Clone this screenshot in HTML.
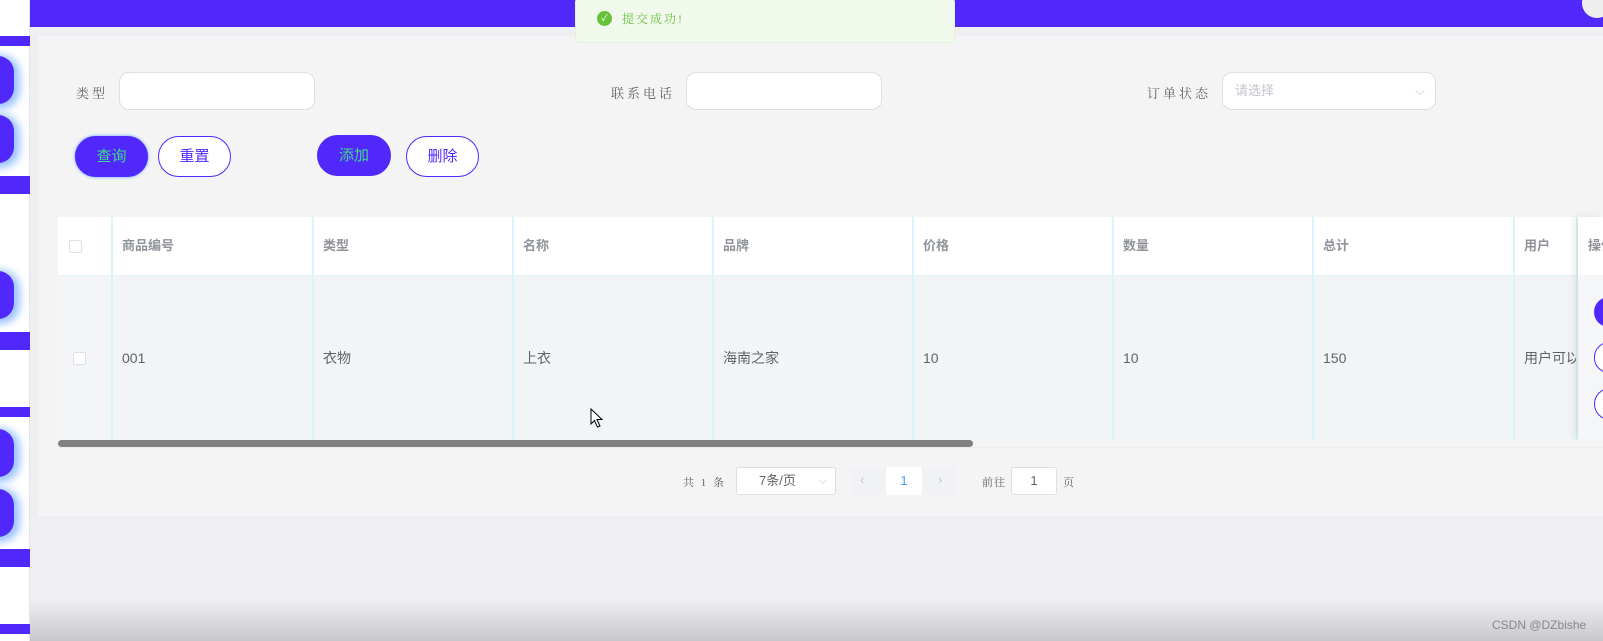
<!DOCTYPE html>
<html><head><meta charset="utf-8"><style>
*{box-sizing:border-box;margin:0;padding:0}
body{width:1603px;height:641px;overflow:hidden;background:#eeeef3;font-family:"Liberation Sans","Noto Sans CJK SC",sans-serif;position:relative}
.abs{position:absolute}
.top{left:30px;top:0;width:1573px;height:27px;background:#5128fb}
.side{left:0;top:0;width:30px;height:641px;background:#fff;border-right:1px solid #e4e4ea}
.bar{left:0;width:30px;background:#5128fb}
.blob{left:-30px;width:44px;height:48px;border-radius:16px;background:#5128fb;box-shadow:3px 2px 8px 3px #9cc4ff}
.panel{left:38px;top:36px;width:1565px;height:480px;background:#f4f4f5}
.lbl{font-family:"Liberation Serif","Noto Serif CJK SC",serif;font-size:13px;color:#606266;letter-spacing:3px}
.inp{height:38px;background:#fff;border:1px solid #dcdfe6;border-radius:10px}
.btn{height:41px;border-radius:21px;font-size:15px;text-align:center;line-height:39px}
.pri{background:#5128fb;color:#3ddc84;border:1px solid #5128fb}
.pln{background:#fff;color:#5128fb;border:1px solid #5128fb}
.th{top:217px;height:58px;background:#fff;font-size:13px;font-weight:bold;color:#909399;line-height:58px;padding-left:9px;border-right:2px solid #d9f4fb}
.td{top:275px;height:165px;background:#f2f5f7;font-size:14px;color:#606266;line-height:165px;padding-left:9px;border-right:2px solid #d9f4fb;border-top:1px solid #e4f4fa}
.cb{width:13px;height:13px;border:1px solid #dcdfe6;background:#fff;border-radius:2px}
.pg{font-family:"Liberation Serif","Noto Serif CJK SC",serif;font-size:11px;color:#606266}
</style></head><body>
<div class="abs side"></div>
<div class="abs bar" style="top:36px;height:10px"></div>
<div class="abs bar" style="top:176px;height:18px"></div>
<div class="abs bar" style="top:332px;height:18px"></div>
<div class="abs bar" style="top:407px;height:10px"></div>
<div class="abs bar" style="top:549px;height:18px"></div>
<div class="abs bar" style="top:624px;height:10px"></div>
<div class="abs blob" style="top:56px"></div>
<div class="abs blob" style="top:115px"></div>
<div class="abs blob" style="top:271px"></div>
<div class="abs blob" style="top:429px"></div>
<div class="abs blob" style="top:489px"></div>
<div class="abs top"></div>
<div class="abs" style="left:1582px;top:-12px;width:30px;height:30px;border-radius:50%;background:#eee"></div>
<div class="abs panel"></div>
<div class="abs" style="left:30px;top:600px;width:1573px;height:41px;background:linear-gradient(#eeeef3,#c8c8cc)"></div>
<div class="abs" style="left:1492px;top:618px;font-size:12px;color:#888">CSDN @DZbishe</div>

<div class="abs" style="left:575px;top:-2px;width:380px;height:45px;background:#f0f9eb;border:1px solid #e1f3d8;border-radius:4px"></div>
<div class="abs" style="left:597px;top:11px;width:15px;height:15px;border-radius:50%;background:#67c23a;color:#fff;font-size:9px;text-align:center;line-height:15px">✓</div>
<div class="abs" style="left:622px;top:10px;font-family:'Liberation Serif','Noto Serif CJK SC',serif;font-size:12px;color:#67c23a;letter-spacing:2px">提交成功!</div>

<div class="abs lbl" style="left:76px;top:83px">类型</div>
<div class="abs inp" style="left:119px;top:72px;width:196px"></div>
<div class="abs lbl" style="left:611px;top:83px">联系电话</div>
<div class="abs inp" style="left:686px;top:72px;width:196px"></div>
<div class="abs lbl" style="left:1147px;top:83px">订单状态</div>
<div class="abs inp" style="left:1222px;top:72px;width:214px;font-size:13px;color:#c0c4cc;line-height:36px;padding-left:12px">请选择<span style="position:absolute;right:10px;top:0;color:#c0c4cc">⌵</span></div>

<div class="abs btn pri" style="left:75px;top:136px;width:73px;box-shadow:0 0 3px #5aa0ff">查询</div>
<div class="abs btn pln" style="left:158px;top:136px;width:73px;color:#5128fb">重置</div>
<div class="abs btn pri" style="left:317px;top:135px;width:74px">添加</div>
<div class="abs btn pln" style="left:406px;top:136px;width:73px">删除</div>

<div class="abs th" style="left:58px;width:55px"></div>
<div class="abs cb" style="left:69px;top:240px"></div>
<div class="abs th" style="left:113px;width:201px">商品编号</div>
<div class="abs th" style="left:314px;width:200px">类型</div>
<div class="abs th" style="left:514px;width:200px">名称</div>
<div class="abs th" style="left:714px;width:200px">品牌</div>
<div class="abs th" style="left:914px;width:200px">价格</div>
<div class="abs th" style="left:1114px;width:200px">数量</div>
<div class="abs th" style="left:1314px;width:201px">总计</div>
<div class="abs th" style="left:1515px;width:63px">用户</div>

<div class="abs td" style="left:58px;width:55px;background:#f3f5f7"></div>
<div class="abs cb" style="left:73px;top:352px"></div>
<div class="abs td" style="left:113px;width:201px">001</div>
<div class="abs td" style="left:314px;width:200px">衣物</div>
<div class="abs td" style="left:514px;width:200px">上衣</div>
<div class="abs td" style="left:714px;width:200px">海南之家</div>
<div class="abs td" style="left:914px;width:200px">10</div>
<div class="abs td" style="left:1114px;width:200px">10</div>
<div class="abs td" style="left:1314px;width:201px">150</div>
<div class="abs td" style="left:1515px;width:63px;overflow:hidden;white-space:nowrap">用户可以</div>

<div class="abs" style="left:1578px;top:217px;width:25px;height:223px;background:#f4f6f8;box-shadow:-4px 0 8px rgba(0,0,0,.08)"></div>
<div class="abs" style="left:1578px;top:217px;width:25px;height:58px;background:#fff;font-size:13px;font-weight:bold;color:#909399;line-height:58px;padding-left:10px;overflow:hidden;white-space:nowrap">操作</div>
<div class="abs" style="left:1594px;top:297px;width:40px;height:30px;border-radius:15px;background:#5128fb"></div>
<div class="abs" style="left:1594px;top:342px;width:40px;height:31px;border-radius:15px;background:#fff;border:1px solid #5128fb"></div>
<div class="abs" style="left:1594px;top:388px;width:40px;height:32px;border-radius:16px;background:#fff;border:1px solid #5128fb"></div>

<div class="abs" style="left:58px;top:440px;width:1545px;height:8px;background:#f4f4f5;border-bottom:1px solid #e8eef4"></div>
<div class="abs" style="left:58px;top:440px;width:915px;height:7px;background:#808080;border-radius:4px"></div>

<div class="abs pg" style="left:683px;top:474px;letter-spacing:2px">共 1 条</div>
<div class="abs" style="left:736px;top:467px;width:100px;height:28px;background:#fff;border:1px solid #dcdfe6;border-radius:3px;font-size:13px;color:#606266;line-height:26px;padding-left:22px">7条/页<span style="position:absolute;right:8px;color:#c0c4cc;font-size:11px">⌵</span></div>
<div class="abs" style="left:850px;top:467px;width:106px;height:28px;background:#f0f2f5;border-radius:2px"></div>
<div class="abs" style="left:886px;top:467px;width:36px;height:28px;background:#fff;font-size:13px;color:#409eff;text-align:center;line-height:28px">1</div>
<div class="abs" style="left:860px;top:472px;font-size:13px;color:#c0c4cc">‹</div>
<div class="abs" style="left:938px;top:472px;font-size:13px;color:#c0c4cc">›</div>
<div class="abs pg" style="left:982px;top:474px;letter-spacing:1px">前往</div>
<div class="abs" style="left:1011px;top:467px;width:46px;height:28px;background:#fff;border:1px solid #dcdfe6;border-radius:3px;font-size:13px;color:#606266;text-align:center;line-height:26px">1</div>
<div class="abs pg" style="left:1063px;top:474px">页</div>
<svg class="abs" style="left:590px;top:408px" width="14" height="20" viewBox="0 0 14 20"><path d="M1 1 L1 16 L4.5 12.5 L7.5 19 L10 18 L7 11.5 L12 11.5 Z" fill="#fff" stroke="#000" stroke-width="1"/></svg>
</body></html>
